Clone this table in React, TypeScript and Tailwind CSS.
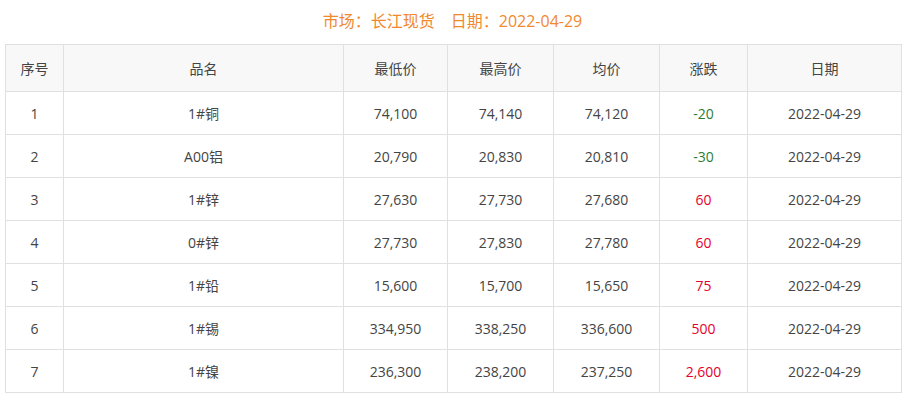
const rows = [
  { id: 1, name: '1#铜', low: '74,100', high: '74,140', avg: '74,120', chg: '-20' },
  { id: 2, name: 'A00铝', low: '20,790', high: '20,830', avg: '20,810', chg: '-30' },
  { id: 3, name: '1#锌', low: '27,630', high: '27,730', avg: '27,680', chg: '60' },
  { id: 4, name: '0#锌', low: '27,730', high: '27,830', avg: '27,780', chg: '60' },
  { id: 5, name: '1#铅', low: '15,600', high: '15,700', avg: '15,650', chg: '75' },
  { id: 6, name: '1#锡', low: '334,950', high: '338,250', avg: '336,600', chg: '500' },
  { id: 7, name: '1#镍', low: '236,300', high: '238,200', avg: '237,250', chg: '2,600' },
];

const cols = ['w-[58px]', 'w-[280px]', 'w-[104px]', 'w-[106px]', 'w-[106px]', 'w-[88px]', 'w-[154px]'];
const heads = ['序号', '品名', '最低价', '最高价', '均价', '涨跌', '日期'];

export default function App() {
  return (
    <div
      className="w-[905px] h-[393px] bg-white overflow-hidden"
      style={{ fontFamily: '"Open Sans", "Noto Sans CJK SC", sans-serif' }}
    >
      {/* Title */}
      <div className="h-[44px] flex items-center justify-center text-[16px] text-[#f0892e] pb-[2px]">
        <span>市场：长江现货</span>
        <span className="ml-[16px]">日期：2022-04-29</span>
      </div>

      {/* Table */}
      <table className="ml-[5px] border-collapse text-[14px] text-[#444] table-fixed">
        <colgroup>
          {cols.map((c, i) => (
            <col key={i} className={c} />
          ))}
        </colgroup>
        <thead>
          <tr className="h-[47px] bg-[#f8f8f8]">
            {heads.map(h => (
              <th key={h} className="border border-[#e0e0e0] font-normal text-center p-0">
                {h}
              </th>
            ))}
          </tr>
        </thead>
        <tbody>
          {rows.map(r => {
            const neg = r.chg.startsWith('-');
            return (
              <tr key={r.id} className="h-[43px]">
                <td className="border border-[#e0e0e0] text-center p-0">{r.id}</td>
                <td className="border border-[#e0e0e0] text-center p-0">{r.name}</td>
                <td className="border border-[#e0e0e0] text-center p-0">{r.low}</td>
                <td className="border border-[#e0e0e0] text-center p-0">{r.high}</td>
                <td className="border border-[#e0e0e0] text-center p-0">{r.avg}</td>
                <td className={`border border-[#e0e0e0] text-center p-0 ${neg ? 'text-[#2e7d32]' : 'text-[#e6002d]'}`}>
                  {r.chg}
                </td>
                <td className="border border-[#e0e0e0] text-center p-0">2022-04-29</td>
              </tr>
            );
          })}
        </tbody>
      </table>
    </div>
  );
}
